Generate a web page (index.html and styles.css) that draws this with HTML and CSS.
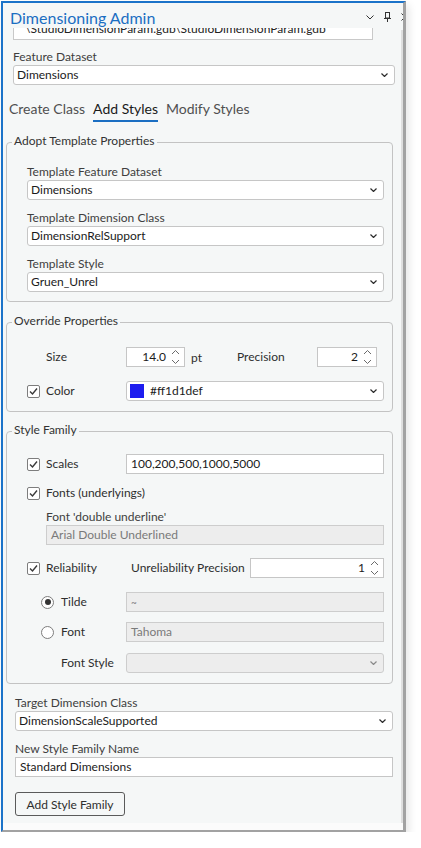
FILE: index.html
```html
<!DOCTYPE html>
<html lang="en">
<head>
<meta charset="utf-8">
<title>Dimensioning Admin</title>
<link rel="stylesheet" href="styles.css">
</head>
<body>
<div class="window">
  <header class="titlebar">
    <span class="title">Dimensioning Admin</span>
    <span class="tb-icons">
      <svg class="tb-icon" width="8" height="5" viewBox="0 0 8 5"><polyline points="0.5,0.5 4,4 7.5,0.5"/></svg>
      <svg class="tb-icon" width="7" height="10" viewBox="0 0 7 10"><rect x="1.5" y="0.5" width="4" height="5.5"/><line x1="0" y1="6.5" x2="7" y2="6.5"/><line x1="3.5" y1="6.5" x2="3.5" y2="10"/></svg>
      <svg class="tb-icon" width="8" height="8" viewBox="0 0 8 8"><line x1="0.5" y1="0.5" x2="7.5" y2="7.5"/><line x1="7.5" y1="0.5" x2="0.5" y2="7.5"/></svg>
    </span>
  </header>
  <div class="body">
    <div class="scroller">
      <div class="content">
        <div class="path-box">\StudioDimensionParam.gdb\StudioDimensionParam.gdb</div>

        <div class="field-label fd-label">Feature Dataset</div>
        <div class="select fd-select">
          <span class="select-value">Dimensions</span>
          <svg class="chev" viewBox="0 0 7 4"><polyline points="0.5,0.5 3.5,3.5 6.5,0.5"/></svg>
        </div>

        <nav class="tabs">
          <span class="tab">Create Class</span>
          <span class="tab active">Add Styles</span>
          <span class="tab">Modify Styles</span>
        </nav>

        <fieldset class="group adopt">
          <legend>Adopt Template Properties</legend>
          <div class="group-body adopt-body">
            <div class="field-label">Template Feature Dataset</div>
            <div class="select">
              <span class="select-value">Dimensions</span>
              <svg class="chev" viewBox="0 0 7 4"><polyline points="0.5,0.5 3.5,3.5 6.5,0.5"/></svg>
            </div>
            <div class="field-label">Template Dimension Class</div>
            <div class="select">
              <span class="select-value">DimensionRelSupport</span>
              <svg class="chev" viewBox="0 0 7 4"><polyline points="0.5,0.5 3.5,3.5 6.5,0.5"/></svg>
            </div>
            <div class="field-label">Template Style</div>
            <div class="select">
              <span class="select-value">Gruen_Unrel</span>
              <svg class="chev" viewBox="0 0 7 4"><polyline points="0.5,0.5 3.5,3.5 6.5,0.5"/></svg>
            </div>
          </div>
        </fieldset>

        <fieldset class="group override">
          <legend>Override Properties</legend>
          <div class="group-body override-body">
            <div class="row">
              <span></span>
              <span class="row-label">Size</span>
              <div class="size-controls">
                <div class="spin size-spin">
                  <span class="spin-value">14.0</span>
                  <svg class="spin-arrows" viewBox="0 0 9 16"><polyline points="1,5 4.5,1.5 8,5"/><polyline points="1,11 4.5,14.5 8,11"/></svg>
                </div>
                <span class="unit">pt</span>
                <span class="row-label precision-label">Precision</span>
                <div class="spin precision-spin">
                  <span class="spin-value">2</span>
                  <svg class="spin-arrows" viewBox="0 0 9 16"><polyline points="1,5 4.5,1.5 8,5"/><polyline points="1,11 4.5,14.5 8,11"/></svg>
                </div>
              </div>
            </div>
            <div class="row color-row">
              <span class="check"><svg viewBox="0 0 11 11"><polyline points="2,5.5 4.5,8 9,2.5"/></svg></span>
              <span class="row-label">Color</span>
              <div class="select color-select">
                <span class="swatch"></span>
                <span class="select-value">#ff1d1def</span>
                <svg class="chev" viewBox="0 0 7 4"><polyline points="0.5,0.5 3.5,3.5 6.5,0.5"/></svg>
              </div>
            </div>
          </div>
        </fieldset>

        <fieldset class="group family">
          <legend>Style Family</legend>
          <div class="group-body family-body">
            <div class="row">
              <span class="check"><svg viewBox="0 0 11 11"><polyline points="2,5.5 4.5,8 9,2.5"/></svg></span>
              <span class="row-label">Scales</span>
              <div class="text-input">100,200,500,1000,5000</div>
            </div>
            <div class="row fonts-row">
              <span class="check"><svg viewBox="0 0 11 11"><polyline points="2,5.5 4.5,8 9,2.5"/></svg></span>
              <span class="row-label span-2">Fonts (underlyings)</span>
            </div>
            <div class="sub">
              <div class="field-label sub-label">Font 'double underline'</div>
              <div class="text-input disabled">Arial Double Underlined</div>
            </div>
            <div class="row reliability-row">
              <span class="check"><svg viewBox="0 0 11 11"><polyline points="2,5.5 4.5,8 9,2.5"/></svg></span>
              <span class="row-label">Reliability</span>
              <span class="row-label">Unreliability Precision</span>
              <div class="spin">
                <span class="spin-value">1</span>
                <svg class="spin-arrows" viewBox="0 0 9 16"><polyline points="1,5 4.5,1.5 8,5"/><polyline points="1,11 4.5,14.5 8,11"/></svg>
              </div>
            </div>
            <div class="row radio-row tilde-row">
              <span class="radio checked"></span>
              <span class="row-label">Tilde</span>
              <div class="text-input disabled tilde-value">~</div>
            </div>
            <div class="row radio-row font-row">
              <span class="radio"></span>
              <span class="row-label">Font</span>
              <div class="text-input disabled">Tahoma</div>
            </div>
            <div class="row radio-row fontstyle-row">
              <span></span>
              <span class="row-label">Font Style</span>
              <div class="select disabled-select">
                <span class="select-value"></span>
                <svg class="chev" viewBox="0 0 7 4"><polyline points="0.5,0.5 3.5,3.5 6.5,0.5"/></svg>
              </div>
            </div>
          </div>
        </fieldset>

        <section class="bottom">
          <div class="field-label">Target Dimension Class</div>
          <div class="select">
            <span class="select-value">DimensionScaleSupported</span>
            <svg class="chev" viewBox="0 0 7 4"><polyline points="0.5,0.5 3.5,3.5 6.5,0.5"/></svg>
          </div>
          <div class="field-label name-label">New Style Family Name</div>
          <div class="text-input">Standard Dimensions</div>
          <button class="btn" type="button">Add Style Family</button>
        </section>
      </div>
    </div>
    <div class="scrollbar"></div>
  </div>
  <div class="footer-strip"></div>
</div>
</body>
</html>
```

FILE: styles.css
```css
* { box-sizing: border-box; }

html, body {
  margin: 0;
  padding: 0;
  background: #ffffff;
}

body {
  font-family: Lato, "Noto Sans", "Open Sans", sans-serif;
  font-size: 12px;
  color: #1b1b1b;
}

.window {
  margin: 1px 0 0 1px;
  width: 405px;
  height: 831px;
  border-style: solid;
  border-width: 2px 3px 2px 2px;
  border-color: #1b73c9 #a2a2a2 #a2a2a2 #1b73c9;
  background: #f5f7f7;
  display: flex;
  flex-direction: column;
  overflow: hidden;
  box-shadow: 3px 4px 8px rgba(0, 0, 0, 0.10);
}

/* title bar */
.titlebar {
  flex: none;
  height: 25px;
  display: flex;
  align-items: flex-start;
}

.title {
  padding: 5px 0 0 7px;
  font-size: 16px;
  line-height: 20px;
  color: #1b6ec2;
}

.tb-icons {
  margin-left: auto;
  margin-right: -6px;
  height: 25px;
  padding-top: 3px;
  display: flex;
  align-items: center;
  gap: 10px;
}

.tb-icon {
  fill: none;
  stroke: #333333;
  stroke-width: 1;
}

/* body */
.body {
  flex: 1;
  min-height: 0;
  display: flex;
}

.scroller {
  flex: 1;
  overflow: hidden;
}

.scrollbar {
  width: 2px;
  margin-top: 2px;
  background: #dedede;
}

.footer-strip {
  flex: none;
  height: 7px;
  background: #fbfbfb;
}

/* controls */
.path-box {
  margin: -9px 0 0 10px;
  width: 360px;
  height: 21px;
  border: 1px solid #c9c9c9;
  background: #ffffff;
  padding-left: 11px;
  line-height: 17px;
  white-space: nowrap;
  overflow: hidden;
  color: #222222;
}

.field-label {
  line-height: 16px;
  color: #3e3e3e;
}

.fd-label {
  margin: 9px 0 0 10px;
}

.select {
  display: flex;
  align-items: center;
  height: 20px;
  background: #ffffff;
  border: 1px solid #c6c6c6;
  border-radius: 3px;
  padding: 0 6px 0 3px;
}

.select-value {
  flex: 1;
  line-height: 18px;
  white-space: nowrap;
}

.chev {
  width: 7px;
  height: 4px;
  fill: none;
  stroke: #2b2b2b;
  stroke-width: 1.2;
}

.fd-select {
  margin-left: 10px;
  width: 382px;
}

.text-input {
  height: 20px;
  background: #ffffff;
  border: 1px solid #c6c6c6;
  padding-left: 4px;
  line-height: 18px;
  white-space: nowrap;
}

.text-input.disabled {
  background: #ededed;
  border-color: #cdcdcd;
  color: #7a7a7a;
}

.tilde-value {
  font-size: 10px;
}

.disabled-select {
  background: #ededed;
  border-color: #cdcdcd;
}

.disabled-select .chev {
  stroke: #8a8a8a;
}

.spin {
  display: flex;
  align-items: center;
  height: 20px;
  background: #ffffff;
  border: 1px solid #c6c6c6;
}

.spin-value {
  flex: 1;
  text-align: right;
  line-height: 18px;
}

.spin-arrows {
  width: 9px;
  height: 16px;
  margin: 0 4px 0 5px;
  fill: none;
  stroke: #6a6a6a;
  stroke-width: 1;
}

/* tabs */
.tabs {
  display: flex;
  gap: 8px;
  margin: 14px 0 0 6px;
}

.tab {
  font-size: 14px;
  line-height: 20px;
  padding-bottom: 1px;
  border-bottom: 2px solid transparent;
  color: #505050;
}

.tab.active {
  color: #1a1a1a;
  border-bottom-color: #1b6ec2;
}

/* group boxes */
fieldset.group {
  margin: 11px 0 0 3px;
  width: 387px;
  min-width: 0;
  padding: 0;
  border: 1px solid #c3c3c3;
  border-radius: 4px;
}

fieldset.group legend {
  margin-left: 5px;
  padding: 0 2px 2px;
  line-height: 16px;
  color: #333333;
}

fieldset.family {
  margin-top: 10px;
}

.group-body {
  padding: 13px 8px 9px 20px;
}

.adopt-body .select + .field-label {
  margin-top: 10px;
}

.override-body {
  padding-top: 16px;
  padding-bottom: 10px;
}

.family-body {
  padding-top: 14px;
  padding-bottom: 10px;
}

.row {
  display: grid;
  grid-template-columns: 19px 80px 258px;
  align-items: center;
  height: 20px;
}

.row-label {
  color: #2e2e2e;
  line-height: 16px;
  white-space: nowrap;
}

.span-2 {
  grid-column: 2 / 4;
}

.color-row {
  margin-top: 14px;
}

.size-controls {
  display: flex;
  align-items: center;
}

.size-spin { width: 59px; }

.unit {
  margin-left: 6px;
  width: 46px;
  color: #2e2e2e;
}

.precision-label { width: 80px; }

.precision-spin { width: 60px; }

.color-select {
  padding-left: 3px;
}

.swatch {
  width: 14px;
  height: 14px;
  background: #1d1def;
  margin-right: 6px;
}

.check {
  width: 13px;
  height: 13px;
  border: 1px solid #7d7d7d;
  border-radius: 2px;
  background: #ffffff;
  display: flex;
  align-items: center;
  justify-content: center;
}

.check svg {
  width: 11px;
  height: 11px;
  fill: none;
  stroke: #3a3a3a;
  stroke-width: 1.4;
}

.fonts-row { margin-top: 9px; }

.sub { margin-left: 19px; }

.sub-label { margin-top: 6px; }

.reliability-row {
  margin-top: 13px;
  grid-template-columns: 19px 85px 119px 134px;
}

.radio-row {
  grid-template-columns: 34px 65px 258px;
}

.radio {
  margin-left: 14px;
  width: 13px;
  height: 13px;
  border: 1px solid #7d7d7d;
  border-radius: 50%;
  background: #ffffff;
  display: flex;
  align-items: center;
  justify-content: center;
}

.radio.checked::after {
  content: "";
  width: 6px;
  height: 6px;
  border-radius: 50%;
  background: #333333;
}

.tilde-row { margin-top: 14px; }
.font-row { margin-top: 10px; }
.fontstyle-row { margin-top: 11px; }

/* bottom section */
.bottom {
  margin: 11px 0 0 12px;
  width: 378px;
}

.name-label { margin-top: 10px; }

.btn {
  display: block;
  margin-top: 15px;
  width: 110px;
  height: 24px;
  padding: 0;
  border: 1px solid #5a5a5a;
  border-radius: 3px;
  background: transparent;
  font-family: inherit;
  font-size: 12px;
  color: #2e2e2e;
}
```
